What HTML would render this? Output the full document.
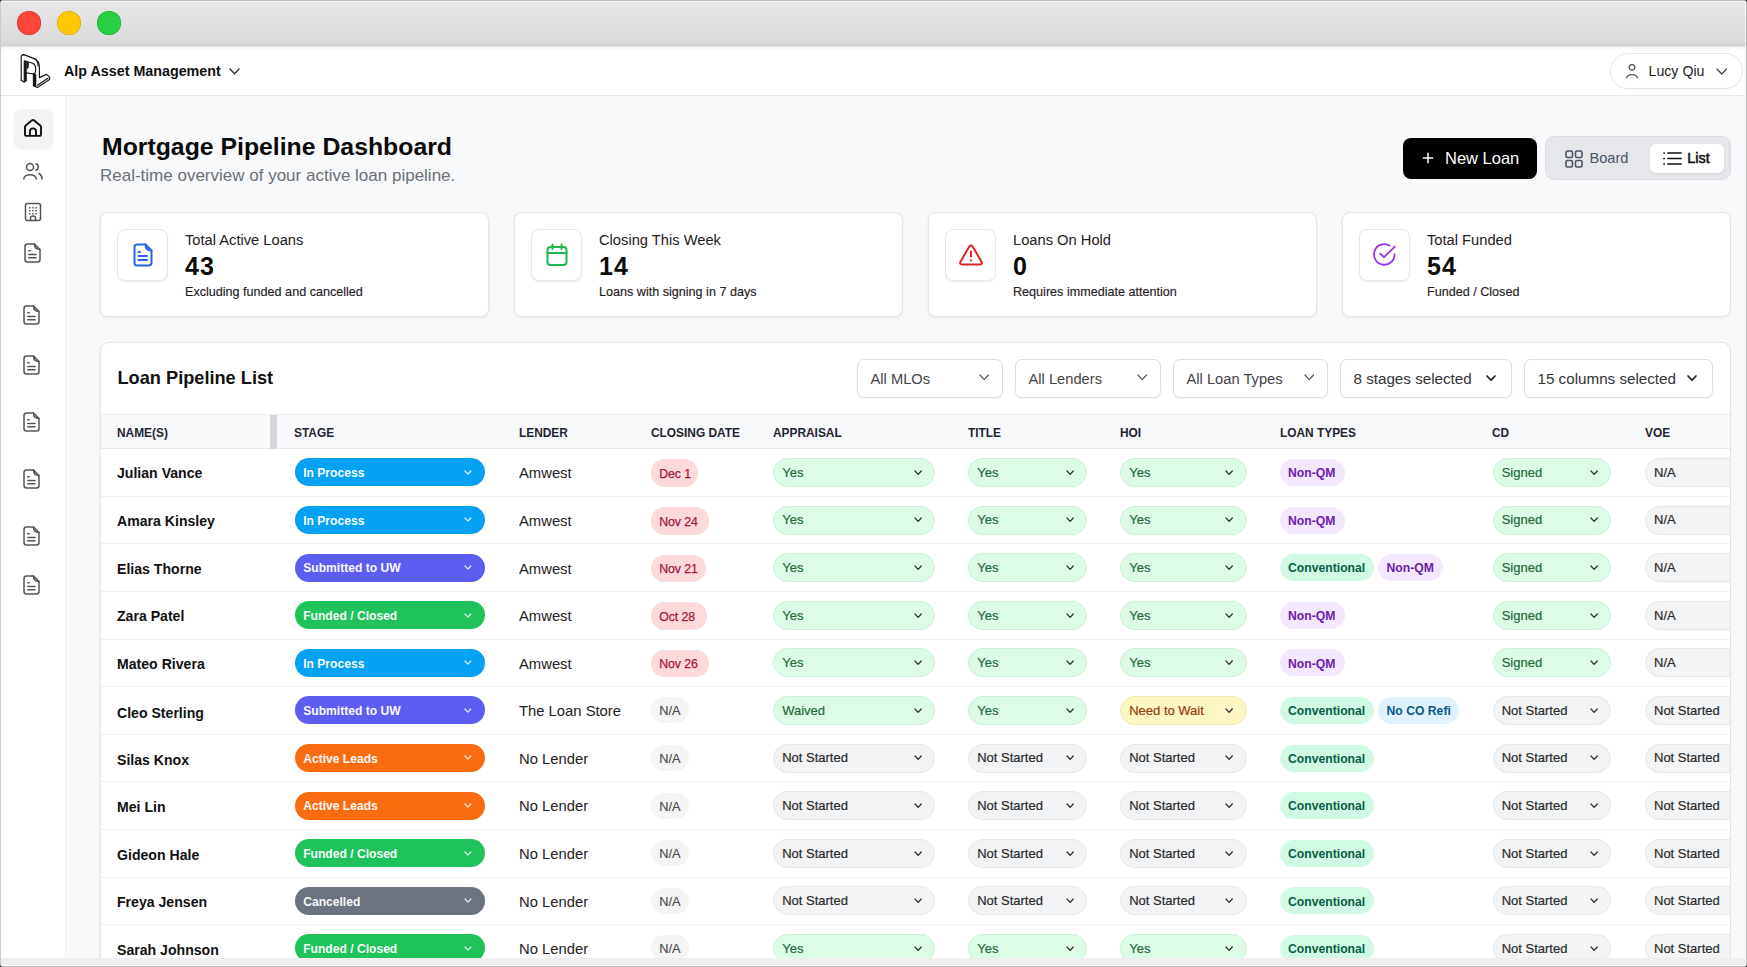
<!DOCTYPE html><html><head><meta charset="utf-8"><style>
*{box-sizing:border-box;margin:0;padding:0}
html,body{width:1747px;height:967px;overflow:hidden;background:#fff;font-family:"Liberation Sans",sans-serif;color:#111}
.abs{position:absolute}
.t{position:absolute;white-space:nowrap;line-height:1}
#win{position:absolute;left:0;top:0;width:1747px;height:967px;overflow:hidden;background:#f8f9fb}
.tl{position:absolute;top:11px;width:24px;height:24px;border-radius:50%}
.box{position:absolute;background:#fff}
.med{-webkit-text-stroke:0.25px currentColor}
</style></head><body><div id="win">
<div class="abs" style="left:0;top:0;width:1747px;height:47px;background:linear-gradient(#e7e7e7 0,#e2e2e2 40%,#dcdbdc 85%,#d2d1d2 97%,#e8e8e8 100%)"></div>
<div class="tl" style="left:17px;top:11px;background:#fe4539;box-shadow:inset 0 0 0 0.7px #dd3a2e"></div>
<div class="tl" style="left:57px;top:11px;background:#fec804;box-shadow:inset 0 0 0 0.7px #dcaa10"></div>
<div class="tl" style="left:97px;top:11px;background:#28cf43;box-shadow:inset 0 0 0 0.7px #1fae38"></div>
<div class="abs" style="left:0;top:47px;width:1747px;height:49px;background:linear-gradient(#f6f6f6 0,#fff 4px);border-bottom:1px solid #e6e7ea"></div>
<svg class="abs" style="left:15px;top:50px" width="40" height="42" viewBox="0 0 40 42">
 <g fill="#151515">
  <path d="M9.3 10.8 L11.8 11.8 V31.3 L9.3 32.3 Z"/>
  <path d="M11.8 11.8 L14.2 12.8 Q13.5 15.5 13.6 17.5 Q12.8 18.5 11.8 19 Z"/>
  <path d="M18.4 23.6 L21.3 24.2 V37 L18.4 35.8 Z"/>
 </g>
 <g fill="none" stroke="#151515" stroke-width="1.15" stroke-linejoin="round" stroke-linecap="round">
  <path d="M6.2 30.2 V6.8 Q6.2 5.4 7.6 5 L9 4.6 L19.2 8.6 Q24.4 11.2 24.4 17.2 V27.6"/>
  <path d="M6.2 30.2 L9.3 32.3 V22.6"/>
  <path d="M9.3 22.6 L17.2 23.8 Q20.6 24 20.6 20.4 V17.6 Q20.6 14.6 17.6 13.3 L9.3 10.8 Z"/>
  <path d="M18.4 23.8 V35.8 L21.3 37 L22.4 37.4 L34.6 29.4 V27.2 L31.6 24.4 L24.4 27.6"/>
  <path d="M22.4 35.2 L33 28.2"/>
  <path d="M9 4.6 L7.6 5 M19.2 8.6 Q23 10.4 23.2 16"/>
 </g>
</svg>
<div class="t" style="left:64px;top:64px;font-size:14.3px;font-weight:bold;color:#111;">Alp Asset Management</div>
<svg class="abs" style="left:227.50px;top:66.60px" width="13" height="8.8" viewBox="0 0 13 8.8"><path d="M2 2 L6.5 6.8 L11 2" fill="none" stroke="#333" stroke-width="1.4" stroke-linecap="round" stroke-linejoin="round"/></svg>
<div class="abs" style="left:1610px;top:53px;width:133px;height:36px;border:1px solid #e3e5e8;border-radius:18px;background:#fff;box-shadow:0 1px 1px rgba(0,0,0,.03)"></div>
<svg class="abs" style="left:1624px;top:63px" width="16" height="16" viewBox="0 0 16 16"><g fill="none" stroke="#555" stroke-width="1.25"><circle cx="8" cy="4.3" r="2.8"/><path d="M2.6 15.5 C2.8 10.3 13.2 10.3 13.4 15.5"/></g></svg>
<div class="t" style="left:1648.5px;top:64px;font-size:14.2px;font-weight:normal;color:#222;">Lucy Qiu</div>
<svg class="abs" style="left:1714.75px;top:67.00px" width="13.5" height="9" viewBox="0 0 13.5 9"><path d="M2 2 L6.75 7 L11.5 2" fill="none" stroke="#444" stroke-width="1.2" stroke-linecap="round" stroke-linejoin="round"/></svg>
<div class="abs" style="left:0;top:96px;width:66px;height:871px;background:#fff;border-right:1px solid #edeff2"></div>
<div class="abs" style="left:14px;top:109px;width:39px;height:39px;border-radius:8px;background:#f3f4f6;box-shadow:0 1px 2px rgba(0,0,0,.08)"></div>
<svg class="abs" style="left:23px;top:118px" width="20" height="20" viewBox="0 0 20 20"><g fill="none" stroke="#111" stroke-width="1.9" stroke-linejoin="round"><path d="M2 16.3 V9 Q2 8.1 2.8 7.4 L8.7 2.5 Q10 1.4 11.3 2.5 L17.2 7.4 Q18 8.1 18 9 V16.3 Q18 17.9 16.4 17.9 H3.6 Q2 17.9 2 16.3 Z"/><path d="M7 17.9 V13.2 Q7 10.4 10 10.4 Q13 10.4 13 13.2 V17.9"/></g></svg>
<svg class="abs" style="left:22px;top:161px" width="22" height="20" viewBox="0 0 22 20"><g fill="none" stroke="#555" stroke-width="1.5" stroke-linecap="round"><circle cx="8" cy="6" r="3.5"/><path d="M1.8 18 C2 12.2 14 12.2 14.2 18"/><path d="M14 2.8 C17 3.5 17 8.5 14 9.2"/><path d="M17 12.5 C19 13.5 20 15.5 20 18"/></g></svg>
<svg class="abs" style="left:24px;top:202px" width="18" height="20" viewBox="0 0 18 20"><g fill="none" stroke="#555" stroke-width="1.5"><rect x="1.5" y="1.5" width="15" height="17" rx="2"/><path d="M6.5 18.5 V15 Q9 13 11.5 15 V18.5"/></g><g fill="#555"><rect x="5" y="5" width="1.5" height="1.5"/><rect x="8.2" y="5" width="1.5" height="1.5"/><rect x="11.4" y="5" width="1.5" height="1.5"/><rect x="5" y="8" width="1.5" height="1.5"/><rect x="8.2" y="8" width="1.5" height="1.5"/><rect x="11.4" y="8" width="1.5" height="1.5"/><rect x="5" y="11" width="1.5" height="1.5"/><rect x="8.2" y="11" width="1.5" height="1.5"/><rect x="11.4" y="11" width="1.5" height="1.5"/></g></svg>
<svg class="abs" style="left:24.0px;top:243px" width="17" height="20" viewBox="0 0 17 20"><g fill="none" stroke="#555" stroke-width="1.5" stroke-linecap="round" stroke-linejoin="round"><path d="M3.5 1 H10.5 L16 6.5 V16.5 Q16 19 13.5 19 H3.5 Q1 19 1 16.5 V3.5 Q1 1 3.5 1 Z"/><path d="M10.5 1 Q10.5 6.5 16 6.5"/><path d="M4.8 7.8 H6.2 M4.8 11.5 H12 M4.8 14.8 H12"/></g></svg>
<svg class="abs" style="left:22.5px;top:305px" width="17" height="20" viewBox="0 0 17 20"><g fill="none" stroke="#555" stroke-width="1.5" stroke-linecap="round" stroke-linejoin="round"><path d="M3.5 1 H10.5 L16 6.5 V16.5 Q16 19 13.5 19 H3.5 Q1 19 1 16.5 V3.5 Q1 1 3.5 1 Z"/><path d="M10.5 1 Q10.5 6.5 16 6.5"/><path d="M4.8 7.8 H6.2 M4.8 11.5 H12 M4.8 14.8 H12"/></g></svg>
<svg class="abs" style="left:22.5px;top:354.5px" width="17" height="20" viewBox="0 0 17 20"><g fill="none" stroke="#555" stroke-width="1.5" stroke-linecap="round" stroke-linejoin="round"><path d="M3.5 1 H10.5 L16 6.5 V16.5 Q16 19 13.5 19 H3.5 Q1 19 1 16.5 V3.5 Q1 1 3.5 1 Z"/><path d="M10.5 1 Q10.5 6.5 16 6.5"/><path d="M4.8 7.8 H6.2 M4.8 11.5 H12 M4.8 14.8 H12"/></g></svg>
<svg class="abs" style="left:22.5px;top:411.8px" width="17" height="20" viewBox="0 0 17 20"><g fill="none" stroke="#555" stroke-width="1.5" stroke-linecap="round" stroke-linejoin="round"><path d="M3.5 1 H10.5 L16 6.5 V16.5 Q16 19 13.5 19 H3.5 Q1 19 1 16.5 V3.5 Q1 1 3.5 1 Z"/><path d="M10.5 1 Q10.5 6.5 16 6.5"/><path d="M4.8 7.8 H6.2 M4.8 11.5 H12 M4.8 14.8 H12"/></g></svg>
<svg class="abs" style="left:22.5px;top:468.7px" width="17" height="20" viewBox="0 0 17 20"><g fill="none" stroke="#555" stroke-width="1.5" stroke-linecap="round" stroke-linejoin="round"><path d="M3.5 1 H10.5 L16 6.5 V16.5 Q16 19 13.5 19 H3.5 Q1 19 1 16.5 V3.5 Q1 1 3.5 1 Z"/><path d="M10.5 1 Q10.5 6.5 16 6.5"/><path d="M4.8 7.8 H6.2 M4.8 11.5 H12 M4.8 14.8 H12"/></g></svg>
<svg class="abs" style="left:22.5px;top:525.7px" width="17" height="20" viewBox="0 0 17 20"><g fill="none" stroke="#555" stroke-width="1.5" stroke-linecap="round" stroke-linejoin="round"><path d="M3.5 1 H10.5 L16 6.5 V16.5 Q16 19 13.5 19 H3.5 Q1 19 1 16.5 V3.5 Q1 1 3.5 1 Z"/><path d="M10.5 1 Q10.5 6.5 16 6.5"/><path d="M4.8 7.8 H6.2 M4.8 11.5 H12 M4.8 14.8 H12"/></g></svg>
<svg class="abs" style="left:22.5px;top:575.4px" width="17" height="20" viewBox="0 0 17 20"><g fill="none" stroke="#555" stroke-width="1.5" stroke-linecap="round" stroke-linejoin="round"><path d="M3.5 1 H10.5 L16 6.5 V16.5 Q16 19 13.5 19 H3.5 Q1 19 1 16.5 V3.5 Q1 1 3.5 1 Z"/><path d="M10.5 1 Q10.5 6.5 16 6.5"/><path d="M4.8 7.8 H6.2 M4.8 11.5 H12 M4.8 14.8 H12"/></g></svg>
<div class="t" style="left:102px;top:135px;font-size:24.8px;font-weight:bold;color:#0b0b0b;">Mortgage Pipeline Dashboard</div>
<div class="t" style="left:100px;top:167px;font-size:17px;font-weight:normal;color:#6b7076;">Real-time overview of your active loan pipeline.</div>
<div class="abs" style="left:1403px;top:138px;width:134px;height:41px;background:#000;border-radius:8px"></div>
<svg class="abs" style="left:1421px;top:151px" width="14" height="14" viewBox="0 0 14 14"><path d="M7 1.8 V12.2 M1.8 7 H12.2" stroke="#fff" stroke-width="1.5"/></svg>
<div class="t" style="left:1445px;top:150px;font-size:16.5px;font-weight:normal;color:#fff;">New Loan</div>
<div class="abs" style="left:1545px;top:136px;width:186px;height:44px;background:#e5e7eb;border:1px solid #dadde2;border-radius:9px"></div>
<div class="abs" style="left:1650px;top:144px;width:74px;height:29px;background:#fff;border-radius:6px;box-shadow:0 1px 2px rgba(0,0,0,.08)"></div>
<svg class="abs" style="left:1565px;top:150px" width="19" height="18" viewBox="0 0 19 18"><g fill="none" stroke="#4b5563" stroke-width="1.6"><rect x="1" y="1" width="6.5" height="6.5" rx="1.5"/><rect x="10.5" y="1" width="6.5" height="6.5" rx="1.5"/><rect x="1" y="10.5" width="6.5" height="6.5" rx="1.5"/><rect x="10.5" y="10.5" width="6.5" height="6.5" rx="1.5"/></g></svg>
<div class="t" style="left:1589.5px;top:151px;font-size:14.6px;font-weight:normal;color:#4b5563;">Board</div>
<svg class="abs" style="left:1663px;top:151px" width="19" height="15" viewBox="0 0 19 15"><g stroke="#111" stroke-width="1.7" stroke-linecap="round"><path d="M1 2 H1.3 M1 7.5 H1.3 M1 13 H1.3"/><path d="M5 2 H18 M5 7.5 H18 M5 13 H18"/></g></svg>
<div class="t" style="left:1687.3px;top:151px;font-size:14.4px;font-weight:normal;color:#111;-webkit-text-stroke:0.55px #111">List</div>
<div class="abs" style="left:100px;top:212px;width:389px;height:105px;background:#fff;border:1px solid #e3e5e9;border-radius:8px;box-shadow:0 1px 3px rgba(0,0,0,.07)"></div>
<div class="abs" style="left:117px;top:229px;width:51px;height:52px;border:1px solid #e5e7eb;border-radius:8px;box-shadow:0 1px 2px rgba(0,0,0,.07);background:#fff"><svg class="abs" style="left:15px;top:13px" width="20" height="24" viewBox="0 0 20 24"><g fill="none" stroke="#2563eb" stroke-width="2" stroke-linecap="round" stroke-linejoin="round"><path d="M4 1.5 H12.5 L18.5 7.5 V19.5 Q18.5 22.5 15.5 22.5 H4 Q1.5 22.5 1.5 19.5 V4.5 Q1.5 1.5 4 1.5 Z"/><path d="M12.5 1.5 Q12.5 7.5 18.5 7.5"/><path d="M5.5 9 H7 M5.5 13 H14 M5.5 17 H14"/></g></svg></div>
<div class="t" style="left:185px;top:233px;font-size:14.7px;font-weight:normal;color:#1f2023;">Total Active Loans</div>
<div class="t" style="left:185px;top:254px;font-size:25px;font-weight:bold;color:#0b0b0b;letter-spacing:1.2px">43</div>
<div class="t" style="left:185px;top:286px;font-size:12.6px;font-weight:normal;color:#1f2023;-webkit-text-stroke:0.15px #1f2023">Excluding funded and cancelled</div>
<div class="abs" style="left:514px;top:212px;width:389px;height:105px;background:#fff;border:1px solid #e3e5e9;border-radius:8px;box-shadow:0 1px 3px rgba(0,0,0,.07)"></div>
<div class="abs" style="left:531px;top:229px;width:51px;height:52px;border:1px solid #e5e7eb;border-radius:8px;box-shadow:0 1px 2px rgba(0,0,0,.07);background:#fff"><svg class="abs" style="left:14px;top:13px" width="22" height="24" viewBox="0 0 22 24"><g fill="none" stroke="#1fb84e" stroke-width="2" stroke-linecap="round" stroke-linejoin="round"><rect x="1.5" y="4" width="19" height="18" rx="3"/><path d="M1.5 10 H20.5 M6.5 1.5 V6 M15.5 1.5 V6"/></g></svg></div>
<div class="t" style="left:599px;top:233px;font-size:14.7px;font-weight:normal;color:#1f2023;">Closing This Week</div>
<div class="t" style="left:599px;top:254px;font-size:25px;font-weight:bold;color:#0b0b0b;letter-spacing:1.2px">14</div>
<div class="t" style="left:599px;top:286px;font-size:12.6px;font-weight:normal;color:#1f2023;-webkit-text-stroke:0.15px #1f2023">Loans with signing in 7 days</div>
<div class="abs" style="left:928px;top:212px;width:389px;height:105px;background:#fff;border:1px solid #e3e5e9;border-radius:8px;box-shadow:0 1px 3px rgba(0,0,0,.07)"></div>
<div class="abs" style="left:945px;top:229px;width:51px;height:52px;border:1px solid #e5e7eb;border-radius:8px;box-shadow:0 1px 2px rgba(0,0,0,.07);background:#fff"><svg class="abs" style="left:13px;top:14px" width="24" height="22" viewBox="0 0 24 22"><g fill="none" stroke="#dc2626" stroke-width="2" stroke-linecap="round" stroke-linejoin="round"><path d="M10.3 2.5 Q12 -0.2 13.7 2.5 L22.5 17.8 Q23.8 20.5 20.8 20.5 H3.2 Q0.2 20.5 1.5 17.8 Z"/><path d="M12 7.5 V12.5 M12 16.3 V16.5"/></g></svg></div>
<div class="t" style="left:1013px;top:233px;font-size:14.7px;font-weight:normal;color:#1f2023;">Loans On Hold</div>
<div class="t" style="left:1013px;top:254px;font-size:25px;font-weight:bold;color:#0b0b0b;letter-spacing:1.2px">0</div>
<div class="t" style="left:1013px;top:286px;font-size:12.6px;font-weight:normal;color:#1f2023;-webkit-text-stroke:0.15px #1f2023">Requires immediate attention</div>
<div class="abs" style="left:1342px;top:212px;width:389px;height:105px;background:#fff;border:1px solid #e3e5e9;border-radius:8px;box-shadow:0 1px 3px rgba(0,0,0,.07)"></div>
<div class="abs" style="left:1359px;top:229px;width:51px;height:52px;border:1px solid #e5e7eb;border-radius:8px;box-shadow:0 1px 2px rgba(0,0,0,.07);background:#fff"><svg class="abs" style="left:12px;top:12px" width="26" height="26" viewBox="0 0 26 26"><g fill="none" stroke="#9333ea" stroke-width="1.8" stroke-linecap="round" stroke-linejoin="round"><path d="M22.6 12.2 A10.3 10.3 0 1 1 17.6 3.6"/><path d="M8.2 11.6 L12 15.2 L22.8 4.6"/></g></svg></div>
<div class="t" style="left:1427px;top:233px;font-size:14.7px;font-weight:normal;color:#1f2023;">Total Funded</div>
<div class="t" style="left:1427px;top:254px;font-size:25px;font-weight:bold;color:#0b0b0b;letter-spacing:1.2px">54</div>
<div class="t" style="left:1427px;top:286px;font-size:12.6px;font-weight:normal;color:#1f2023;-webkit-text-stroke:0.15px #1f2023">Funded / Closed</div>
<div class="abs" style="left:100px;top:342px;width:1631px;height:640px;background:#fff;border:1px solid #e3e5e9;border-radius:9px;box-shadow:0 1px 3px rgba(0,0,0,.06)"></div>
<div class="t" style="left:117.5px;top:369px;font-size:18.2px;font-weight:bold;color:#111;">Loan Pipeline List</div>
<div class="abs" style="left:857px;top:359px;width:146px;height:39px;border:1px solid #dcdddf;border-radius:7px;background:#fff;box-shadow:0 1px 2px rgba(0,0,0,.06)"></div>
<div class="t" style="left:870.5px;top:372px;font-size:14.7px;font-weight:normal;color:#444;">All MLOs</div>
<svg class="abs" style="left:978.25px;top:373.10px" width="12.5" height="8.6" viewBox="0 0 12.5 8.6"><path d="M2 2 L6.25 6.6 L10.5 2" fill="none" stroke="#555" stroke-width="1.2" stroke-linecap="round" stroke-linejoin="round"/></svg>
<div class="abs" style="left:1015px;top:359px;width:146px;height:39px;border:1px solid #dcdddf;border-radius:7px;background:#fff;box-shadow:0 1px 2px rgba(0,0,0,.06)"></div>
<div class="t" style="left:1028.5px;top:372px;font-size:14.7px;font-weight:normal;color:#444;">All Lenders</div>
<svg class="abs" style="left:1136.25px;top:373.10px" width="12.5" height="8.6" viewBox="0 0 12.5 8.6"><path d="M2 2 L6.25 6.6 L10.5 2" fill="none" stroke="#555" stroke-width="1.2" stroke-linecap="round" stroke-linejoin="round"/></svg>
<div class="abs" style="left:1173px;top:359px;width:155px;height:39px;border:1px solid #dcdddf;border-radius:7px;background:#fff;box-shadow:0 1px 2px rgba(0,0,0,.06)"></div>
<div class="t" style="left:1186.5px;top:372px;font-size:14.7px;font-weight:normal;color:#444;">All Loan Types</div>
<svg class="abs" style="left:1303.25px;top:373.10px" width="12.5" height="8.6" viewBox="0 0 12.5 8.6"><path d="M2 2 L6.25 6.6 L10.5 2" fill="none" stroke="#555" stroke-width="1.2" stroke-linecap="round" stroke-linejoin="round"/></svg>
<div class="abs" style="left:1340px;top:359px;width:172px;height:39px;border:1px solid #dcdddf;border-radius:7px;background:#fff;box-shadow:0 1px 2px rgba(0,0,0,.06)"></div>
<div class="t" style="left:1353.5px;top:371px;font-size:15.2px;font-weight:normal;color:#333;">8 stages selected</div>
<svg class="abs" style="left:1484.50px;top:374.20px" width="12" height="8.2" viewBox="0 0 12 8.2"><path d="M2 2 L6.0 6.2 L10 2" fill="none" stroke="#222" stroke-width="1.7" stroke-linecap="round" stroke-linejoin="round"/></svg>
<div class="abs" style="left:1524px;top:359px;width:189px;height:39px;border:1px solid #dcdddf;border-radius:7px;background:#fff;box-shadow:0 1px 2px rgba(0,0,0,.06)"></div>
<div class="t" style="left:1537.5px;top:371px;font-size:15.2px;font-weight:normal;color:#333;">15 columns selected</div>
<svg class="abs" style="left:1685.50px;top:374.20px" width="12" height="8.2" viewBox="0 0 12 8.2"><path d="M2 2 L6.0 6.2 L10 2" fill="none" stroke="#222" stroke-width="1.7" stroke-linecap="round" stroke-linejoin="round"/></svg>
<div class="abs" style="left:101px;top:414px;width:1629px;height:35px;background:#f8f9fb;border-top:1px solid #eceef1;border-bottom:1px solid #e8eaed"></div>
<div class="abs" style="left:270px;top:415px;width:7px;height:34px;background:#d3d5d9"></div>
<div class="t" style="left:117px;top:428px;font-size:11.9px;font-weight:bold;color:#1f2430;">NAME(S)</div>
<div class="t" style="left:294px;top:428px;font-size:11.9px;font-weight:bold;color:#1f2430;">STAGE</div>
<div class="t" style="left:519px;top:428px;font-size:11.9px;font-weight:bold;color:#1f2430;">LENDER</div>
<div class="t" style="left:651px;top:428px;font-size:11.9px;font-weight:bold;color:#1f2430;">CLOSING DATE</div>
<div class="t" style="left:773px;top:428px;font-size:11.9px;font-weight:bold;color:#1f2430;">APPRAISAL</div>
<div class="t" style="left:968px;top:428px;font-size:11.9px;font-weight:bold;color:#1f2430;">TITLE</div>
<div class="t" style="left:1120px;top:428px;font-size:11.9px;font-weight:bold;color:#1f2430;">HOI</div>
<div class="t" style="left:1280px;top:428px;font-size:11.9px;font-weight:bold;color:#1f2430;">LOAN TYPES</div>
<div class="t" style="left:1492px;top:428px;font-size:11.9px;font-weight:bold;color:#1f2430;">CD</div>
<div class="t" style="left:1645px;top:428px;font-size:11.9px;font-weight:bold;color:#1f2430;">VOE</div>
<div class="abs" style="left:101px;top:495.70px;width:1629px;height:1px;background:#eceef1"></div>
<div class="t" style="left:117px;top:466px;font-size:14.1px;font-weight:bold;color:#111;">Julian Vance</div>
<div class="abs" style="left:294.5px;top:458.40px;width:190.5px;height:28px;border-radius:14px;background:#05a2f3"></div>
<div class="t" style="left:303.2px;top:467px;font-size:12.1px;font-weight:bold;color:#fff;opacity:.96">In Process</div>
<svg class="abs" style="left:463.40px;top:468.85px" width="9.8" height="7.1" viewBox="0 0 9.8 7.1"><path d="M2 2 L4.9 5.1 L7.800000000000001 2" fill="none" stroke="rgba(255,255,255,.85)" stroke-width="1.3" stroke-linecap="round" stroke-linejoin="round"/></svg>
<div class="t" style="left:519px;top:466px;font-size:14.8px;font-weight:normal;color:#222;">Amwest</div>
<div class="abs" style="left:651px;top:459.40px;width:46.5px;height:27.6px;border-radius:13.8px;background:#fdd9dc"></div>
<div class="t" style="left:659.3px;top:468px;font-size:12.3px;font-weight:normal;color:#a3173a;letter-spacing:-0.1px;-webkit-text-stroke:0.25px #a3173a">Dec 1</div>
<div class="abs" style="left:773px;top:457.90px;width:162px;height:29px;border-radius:14.5px;background:#dcfce7;border:1px solid #cdeed8"></div>
<div class="t" style="left:782.2px;top:466px;font-size:13px;font-weight:normal;color:#1e6b3c;-webkit-text-stroke:0.2px #1e6b3c">Yes</div>
<svg class="abs" style="left:912.85px;top:468.70px" width="10.3" height="7.4" viewBox="0 0 10.3 7.4"><path d="M2 2 L5.15 5.4 L8.3 2" fill="none" stroke="#333" stroke-width="1.3" stroke-linecap="round" stroke-linejoin="round"/></svg>
<div class="abs" style="left:968px;top:457.90px;width:119px;height:29px;border-radius:14.5px;background:#dcfce7;border:1px solid #cdeed8"></div>
<div class="t" style="left:977.2px;top:466px;font-size:13px;font-weight:normal;color:#1e6b3c;-webkit-text-stroke:0.2px #1e6b3c">Yes</div>
<svg class="abs" style="left:1064.85px;top:468.70px" width="10.3" height="7.4" viewBox="0 0 10.3 7.4"><path d="M2 2 L5.15 5.4 L8.3 2" fill="none" stroke="#333" stroke-width="1.3" stroke-linecap="round" stroke-linejoin="round"/></svg>
<div class="abs" style="left:1120px;top:457.90px;width:126.5px;height:29px;border-radius:14.5px;background:#dcfce7;border:1px solid #cdeed8"></div>
<div class="t" style="left:1129.2px;top:466px;font-size:13px;font-weight:normal;color:#1e6b3c;-webkit-text-stroke:0.2px #1e6b3c">Yes</div>
<svg class="abs" style="left:1224.35px;top:468.70px" width="10.3" height="7.4" viewBox="0 0 10.3 7.4"><path d="M2 2 L5.15 5.4 L8.3 2" fill="none" stroke="#333" stroke-width="1.3" stroke-linecap="round" stroke-linejoin="round"/></svg>
<div class="abs" style="left:1492.5px;top:457.90px;width:118.5px;height:29px;border-radius:14.5px;background:#dcfce7;border:1px solid #cdeed8"></div>
<div class="t" style="left:1501.7px;top:466px;font-size:13px;font-weight:normal;color:#1e6b3c;-webkit-text-stroke:0.2px #1e6b3c">Signed</div>
<svg class="abs" style="left:1588.85px;top:468.70px" width="10.3" height="7.4" viewBox="0 0 10.3 7.4"><path d="M2 2 L5.15 5.4 L8.3 2" fill="none" stroke="#333" stroke-width="1.3" stroke-linecap="round" stroke-linejoin="round"/></svg>
<div class="abs" style="left:1645px;top:457.90px;width:120px;height:29px;border-radius:14.5px;background:#f3f4f6;border:1px solid #e6e7ea"></div>
<div class="t" style="left:1654px;top:466px;font-size:13px;font-weight:normal;color:#2a2a2a;-webkit-text-stroke:0.2px #2a2a2a">N/A</div>
<div class="abs" style="left:1279.5px;top:458.90px;width:65px;height:27px;border-radius:13.5px;background:#f3e8ff"></div>
<div class="t" style="left:1288.0px;top:467px;font-size:12.2px;font-weight:bold;color:#6b21a8;">Non-QM</div>
<div class="abs" style="left:101px;top:543.30px;width:1629px;height:1px;background:#eceef1"></div>
<div class="t" style="left:117px;top:514px;font-size:14.1px;font-weight:bold;color:#111;">Amara Kinsley</div>
<div class="abs" style="left:294.5px;top:506.00px;width:190.5px;height:28px;border-radius:14px;background:#05a2f3"></div>
<div class="t" style="left:303.2px;top:515px;font-size:12.1px;font-weight:bold;color:#fff;opacity:.96">In Process</div>
<svg class="abs" style="left:463.40px;top:516.45px" width="9.8" height="7.1" viewBox="0 0 9.8 7.1"><path d="M2 2 L4.9 5.1 L7.800000000000001 2" fill="none" stroke="rgba(255,255,255,.85)" stroke-width="1.3" stroke-linecap="round" stroke-linejoin="round"/></svg>
<div class="t" style="left:519px;top:514px;font-size:14.8px;font-weight:normal;color:#222;">Amwest</div>
<div class="abs" style="left:651px;top:507.00px;width:57.5px;height:27.6px;border-radius:13.8px;background:#fdd9dc"></div>
<div class="t" style="left:659.3px;top:516px;font-size:12.3px;font-weight:normal;color:#a3173a;letter-spacing:-0.1px;-webkit-text-stroke:0.25px #a3173a">Nov 24</div>
<div class="abs" style="left:773px;top:505.50px;width:162px;height:29px;border-radius:14.5px;background:#dcfce7;border:1px solid #cdeed8"></div>
<div class="t" style="left:782.2px;top:513px;font-size:13px;font-weight:normal;color:#1e6b3c;-webkit-text-stroke:0.2px #1e6b3c">Yes</div>
<svg class="abs" style="left:912.85px;top:516.30px" width="10.3" height="7.4" viewBox="0 0 10.3 7.4"><path d="M2 2 L5.15 5.4 L8.3 2" fill="none" stroke="#333" stroke-width="1.3" stroke-linecap="round" stroke-linejoin="round"/></svg>
<div class="abs" style="left:968px;top:505.50px;width:119px;height:29px;border-radius:14.5px;background:#dcfce7;border:1px solid #cdeed8"></div>
<div class="t" style="left:977.2px;top:513px;font-size:13px;font-weight:normal;color:#1e6b3c;-webkit-text-stroke:0.2px #1e6b3c">Yes</div>
<svg class="abs" style="left:1064.85px;top:516.30px" width="10.3" height="7.4" viewBox="0 0 10.3 7.4"><path d="M2 2 L5.15 5.4 L8.3 2" fill="none" stroke="#333" stroke-width="1.3" stroke-linecap="round" stroke-linejoin="round"/></svg>
<div class="abs" style="left:1120px;top:505.50px;width:126.5px;height:29px;border-radius:14.5px;background:#dcfce7;border:1px solid #cdeed8"></div>
<div class="t" style="left:1129.2px;top:513px;font-size:13px;font-weight:normal;color:#1e6b3c;-webkit-text-stroke:0.2px #1e6b3c">Yes</div>
<svg class="abs" style="left:1224.35px;top:516.30px" width="10.3" height="7.4" viewBox="0 0 10.3 7.4"><path d="M2 2 L5.15 5.4 L8.3 2" fill="none" stroke="#333" stroke-width="1.3" stroke-linecap="round" stroke-linejoin="round"/></svg>
<div class="abs" style="left:1492.5px;top:505.50px;width:118.5px;height:29px;border-radius:14.5px;background:#dcfce7;border:1px solid #cdeed8"></div>
<div class="t" style="left:1501.7px;top:513px;font-size:13px;font-weight:normal;color:#1e6b3c;-webkit-text-stroke:0.2px #1e6b3c">Signed</div>
<svg class="abs" style="left:1588.85px;top:516.30px" width="10.3" height="7.4" viewBox="0 0 10.3 7.4"><path d="M2 2 L5.15 5.4 L8.3 2" fill="none" stroke="#333" stroke-width="1.3" stroke-linecap="round" stroke-linejoin="round"/></svg>
<div class="abs" style="left:1645px;top:505.50px;width:120px;height:29px;border-radius:14.5px;background:#f3f4f6;border:1px solid #e6e7ea"></div>
<div class="t" style="left:1654px;top:513px;font-size:13px;font-weight:normal;color:#2a2a2a;-webkit-text-stroke:0.2px #2a2a2a">N/A</div>
<div class="abs" style="left:1279.5px;top:506.50px;width:65px;height:27px;border-radius:13.5px;background:#f3e8ff"></div>
<div class="t" style="left:1288.0px;top:515px;font-size:12.2px;font-weight:bold;color:#6b21a8;">Non-QM</div>
<div class="abs" style="left:101px;top:590.90px;width:1629px;height:1px;background:#eceef1"></div>
<div class="t" style="left:117px;top:562px;font-size:14.1px;font-weight:bold;color:#111;">Elias Thorne</div>
<div class="abs" style="left:294.5px;top:553.60px;width:190.5px;height:28px;border-radius:14px;background:#5d5df2"></div>
<div class="t" style="left:303.2px;top:562px;font-size:12.1px;font-weight:bold;color:#fff;opacity:.96">Submitted to UW</div>
<svg class="abs" style="left:463.40px;top:564.05px" width="9.8" height="7.1" viewBox="0 0 9.8 7.1"><path d="M2 2 L4.9 5.1 L7.800000000000001 2" fill="none" stroke="rgba(255,255,255,.85)" stroke-width="1.3" stroke-linecap="round" stroke-linejoin="round"/></svg>
<div class="t" style="left:519px;top:562px;font-size:14.8px;font-weight:normal;color:#222;">Amwest</div>
<div class="abs" style="left:651px;top:554.60px;width:54.5px;height:27.6px;border-radius:13.8px;background:#fdd9dc"></div>
<div class="t" style="left:659.3px;top:563px;font-size:12.3px;font-weight:normal;color:#a3173a;letter-spacing:-0.1px;-webkit-text-stroke:0.25px #a3173a">Nov 21</div>
<div class="abs" style="left:773px;top:553.10px;width:162px;height:29px;border-radius:14.5px;background:#dcfce7;border:1px solid #cdeed8"></div>
<div class="t" style="left:782.2px;top:561px;font-size:13px;font-weight:normal;color:#1e6b3c;-webkit-text-stroke:0.2px #1e6b3c">Yes</div>
<svg class="abs" style="left:912.85px;top:563.90px" width="10.3" height="7.4" viewBox="0 0 10.3 7.4"><path d="M2 2 L5.15 5.4 L8.3 2" fill="none" stroke="#333" stroke-width="1.3" stroke-linecap="round" stroke-linejoin="round"/></svg>
<div class="abs" style="left:968px;top:553.10px;width:119px;height:29px;border-radius:14.5px;background:#dcfce7;border:1px solid #cdeed8"></div>
<div class="t" style="left:977.2px;top:561px;font-size:13px;font-weight:normal;color:#1e6b3c;-webkit-text-stroke:0.2px #1e6b3c">Yes</div>
<svg class="abs" style="left:1064.85px;top:563.90px" width="10.3" height="7.4" viewBox="0 0 10.3 7.4"><path d="M2 2 L5.15 5.4 L8.3 2" fill="none" stroke="#333" stroke-width="1.3" stroke-linecap="round" stroke-linejoin="round"/></svg>
<div class="abs" style="left:1120px;top:553.10px;width:126.5px;height:29px;border-radius:14.5px;background:#dcfce7;border:1px solid #cdeed8"></div>
<div class="t" style="left:1129.2px;top:561px;font-size:13px;font-weight:normal;color:#1e6b3c;-webkit-text-stroke:0.2px #1e6b3c">Yes</div>
<svg class="abs" style="left:1224.35px;top:563.90px" width="10.3" height="7.4" viewBox="0 0 10.3 7.4"><path d="M2 2 L5.15 5.4 L8.3 2" fill="none" stroke="#333" stroke-width="1.3" stroke-linecap="round" stroke-linejoin="round"/></svg>
<div class="abs" style="left:1492.5px;top:553.10px;width:118.5px;height:29px;border-radius:14.5px;background:#dcfce7;border:1px solid #cdeed8"></div>
<div class="t" style="left:1501.7px;top:561px;font-size:13px;font-weight:normal;color:#1e6b3c;-webkit-text-stroke:0.2px #1e6b3c">Signed</div>
<svg class="abs" style="left:1588.85px;top:563.90px" width="10.3" height="7.4" viewBox="0 0 10.3 7.4"><path d="M2 2 L5.15 5.4 L8.3 2" fill="none" stroke="#333" stroke-width="1.3" stroke-linecap="round" stroke-linejoin="round"/></svg>
<div class="abs" style="left:1645px;top:553.10px;width:120px;height:29px;border-radius:14.5px;background:#f3f4f6;border:1px solid #e6e7ea"></div>
<div class="t" style="left:1654px;top:561px;font-size:13px;font-weight:normal;color:#2a2a2a;-webkit-text-stroke:0.2px #2a2a2a">N/A</div>
<div class="abs" style="left:1279.5px;top:554.10px;width:94px;height:27px;border-radius:13.5px;background:#d1fae5"></div>
<div class="t" style="left:1288.0px;top:562px;font-size:12.2px;font-weight:bold;color:#065f46;">Conventional</div>
<div class="abs" style="left:1378.0px;top:554.10px;width:65px;height:27px;border-radius:13.5px;background:#f3e8ff"></div>
<div class="t" style="left:1386.5px;top:562px;font-size:12.2px;font-weight:bold;color:#6b21a8;">Non-QM</div>
<div class="abs" style="left:101px;top:638.50px;width:1629px;height:1px;background:#eceef1"></div>
<div class="t" style="left:117px;top:609px;font-size:14.1px;font-weight:bold;color:#111;">Zara Patel</div>
<div class="abs" style="left:294.5px;top:601.20px;width:190.5px;height:28px;border-radius:14px;background:#1fc35a"></div>
<div class="t" style="left:303.2px;top:610px;font-size:12.1px;font-weight:bold;color:#fff;opacity:.96">Funded / Closed</div>
<svg class="abs" style="left:463.40px;top:611.65px" width="9.8" height="7.1" viewBox="0 0 9.8 7.1"><path d="M2 2 L4.9 5.1 L7.800000000000001 2" fill="none" stroke="rgba(255,255,255,.85)" stroke-width="1.3" stroke-linecap="round" stroke-linejoin="round"/></svg>
<div class="t" style="left:519px;top:609px;font-size:14.8px;font-weight:normal;color:#222;">Amwest</div>
<div class="abs" style="left:651px;top:602.20px;width:55.5px;height:27.6px;border-radius:13.8px;background:#fdd9dc"></div>
<div class="t" style="left:659.3px;top:611px;font-size:12.3px;font-weight:normal;color:#a3173a;letter-spacing:-0.1px;-webkit-text-stroke:0.25px #a3173a">Oct 28</div>
<div class="abs" style="left:773px;top:600.70px;width:162px;height:29px;border-radius:14.5px;background:#dcfce7;border:1px solid #cdeed8"></div>
<div class="t" style="left:782.2px;top:609px;font-size:13px;font-weight:normal;color:#1e6b3c;-webkit-text-stroke:0.2px #1e6b3c">Yes</div>
<svg class="abs" style="left:912.85px;top:611.50px" width="10.3" height="7.4" viewBox="0 0 10.3 7.4"><path d="M2 2 L5.15 5.4 L8.3 2" fill="none" stroke="#333" stroke-width="1.3" stroke-linecap="round" stroke-linejoin="round"/></svg>
<div class="abs" style="left:968px;top:600.70px;width:119px;height:29px;border-radius:14.5px;background:#dcfce7;border:1px solid #cdeed8"></div>
<div class="t" style="left:977.2px;top:609px;font-size:13px;font-weight:normal;color:#1e6b3c;-webkit-text-stroke:0.2px #1e6b3c">Yes</div>
<svg class="abs" style="left:1064.85px;top:611.50px" width="10.3" height="7.4" viewBox="0 0 10.3 7.4"><path d="M2 2 L5.15 5.4 L8.3 2" fill="none" stroke="#333" stroke-width="1.3" stroke-linecap="round" stroke-linejoin="round"/></svg>
<div class="abs" style="left:1120px;top:600.70px;width:126.5px;height:29px;border-radius:14.5px;background:#dcfce7;border:1px solid #cdeed8"></div>
<div class="t" style="left:1129.2px;top:609px;font-size:13px;font-weight:normal;color:#1e6b3c;-webkit-text-stroke:0.2px #1e6b3c">Yes</div>
<svg class="abs" style="left:1224.35px;top:611.50px" width="10.3" height="7.4" viewBox="0 0 10.3 7.4"><path d="M2 2 L5.15 5.4 L8.3 2" fill="none" stroke="#333" stroke-width="1.3" stroke-linecap="round" stroke-linejoin="round"/></svg>
<div class="abs" style="left:1492.5px;top:600.70px;width:118.5px;height:29px;border-radius:14.5px;background:#dcfce7;border:1px solid #cdeed8"></div>
<div class="t" style="left:1501.7px;top:609px;font-size:13px;font-weight:normal;color:#1e6b3c;-webkit-text-stroke:0.2px #1e6b3c">Signed</div>
<svg class="abs" style="left:1588.85px;top:611.50px" width="10.3" height="7.4" viewBox="0 0 10.3 7.4"><path d="M2 2 L5.15 5.4 L8.3 2" fill="none" stroke="#333" stroke-width="1.3" stroke-linecap="round" stroke-linejoin="round"/></svg>
<div class="abs" style="left:1645px;top:600.70px;width:120px;height:29px;border-radius:14.5px;background:#f3f4f6;border:1px solid #e6e7ea"></div>
<div class="t" style="left:1654px;top:609px;font-size:13px;font-weight:normal;color:#2a2a2a;-webkit-text-stroke:0.2px #2a2a2a">N/A</div>
<div class="abs" style="left:1279.5px;top:601.70px;width:65px;height:27px;border-radius:13.5px;background:#f3e8ff"></div>
<div class="t" style="left:1288.0px;top:610px;font-size:12.2px;font-weight:bold;color:#6b21a8;">Non-QM</div>
<div class="abs" style="left:101px;top:686.10px;width:1629px;height:1px;background:#eceef1"></div>
<div class="t" style="left:117px;top:657px;font-size:14.1px;font-weight:bold;color:#111;">Mateo Rivera</div>
<div class="abs" style="left:294.5px;top:648.80px;width:190.5px;height:28px;border-radius:14px;background:#05a2f3"></div>
<div class="t" style="left:303.2px;top:658px;font-size:12.1px;font-weight:bold;color:#fff;opacity:.96">In Process</div>
<svg class="abs" style="left:463.40px;top:659.25px" width="9.8" height="7.1" viewBox="0 0 9.8 7.1"><path d="M2 2 L4.9 5.1 L7.800000000000001 2" fill="none" stroke="rgba(255,255,255,.85)" stroke-width="1.3" stroke-linecap="round" stroke-linejoin="round"/></svg>
<div class="t" style="left:519px;top:657px;font-size:14.8px;font-weight:normal;color:#222;">Amwest</div>
<div class="abs" style="left:651px;top:649.80px;width:57.5px;height:27.6px;border-radius:13.8px;background:#fdd9dc"></div>
<div class="t" style="left:659.3px;top:658px;font-size:12.3px;font-weight:normal;color:#a3173a;letter-spacing:-0.1px;-webkit-text-stroke:0.25px #a3173a">Nov 26</div>
<div class="abs" style="left:773px;top:648.30px;width:162px;height:29px;border-radius:14.5px;background:#dcfce7;border:1px solid #cdeed8"></div>
<div class="t" style="left:782.2px;top:656px;font-size:13px;font-weight:normal;color:#1e6b3c;-webkit-text-stroke:0.2px #1e6b3c">Yes</div>
<svg class="abs" style="left:912.85px;top:659.10px" width="10.3" height="7.4" viewBox="0 0 10.3 7.4"><path d="M2 2 L5.15 5.4 L8.3 2" fill="none" stroke="#333" stroke-width="1.3" stroke-linecap="round" stroke-linejoin="round"/></svg>
<div class="abs" style="left:968px;top:648.30px;width:119px;height:29px;border-radius:14.5px;background:#dcfce7;border:1px solid #cdeed8"></div>
<div class="t" style="left:977.2px;top:656px;font-size:13px;font-weight:normal;color:#1e6b3c;-webkit-text-stroke:0.2px #1e6b3c">Yes</div>
<svg class="abs" style="left:1064.85px;top:659.10px" width="10.3" height="7.4" viewBox="0 0 10.3 7.4"><path d="M2 2 L5.15 5.4 L8.3 2" fill="none" stroke="#333" stroke-width="1.3" stroke-linecap="round" stroke-linejoin="round"/></svg>
<div class="abs" style="left:1120px;top:648.30px;width:126.5px;height:29px;border-radius:14.5px;background:#dcfce7;border:1px solid #cdeed8"></div>
<div class="t" style="left:1129.2px;top:656px;font-size:13px;font-weight:normal;color:#1e6b3c;-webkit-text-stroke:0.2px #1e6b3c">Yes</div>
<svg class="abs" style="left:1224.35px;top:659.10px" width="10.3" height="7.4" viewBox="0 0 10.3 7.4"><path d="M2 2 L5.15 5.4 L8.3 2" fill="none" stroke="#333" stroke-width="1.3" stroke-linecap="round" stroke-linejoin="round"/></svg>
<div class="abs" style="left:1492.5px;top:648.30px;width:118.5px;height:29px;border-radius:14.5px;background:#dcfce7;border:1px solid #cdeed8"></div>
<div class="t" style="left:1501.7px;top:656px;font-size:13px;font-weight:normal;color:#1e6b3c;-webkit-text-stroke:0.2px #1e6b3c">Signed</div>
<svg class="abs" style="left:1588.85px;top:659.10px" width="10.3" height="7.4" viewBox="0 0 10.3 7.4"><path d="M2 2 L5.15 5.4 L8.3 2" fill="none" stroke="#333" stroke-width="1.3" stroke-linecap="round" stroke-linejoin="round"/></svg>
<div class="abs" style="left:1645px;top:648.30px;width:120px;height:29px;border-radius:14.5px;background:#f3f4f6;border:1px solid #e6e7ea"></div>
<div class="t" style="left:1654px;top:656px;font-size:13px;font-weight:normal;color:#2a2a2a;-webkit-text-stroke:0.2px #2a2a2a">N/A</div>
<div class="abs" style="left:1279.5px;top:649.30px;width:65px;height:27px;border-radius:13.5px;background:#f3e8ff"></div>
<div class="t" style="left:1288.0px;top:658px;font-size:12.2px;font-weight:bold;color:#6b21a8;">Non-QM</div>
<div class="abs" style="left:101px;top:733.70px;width:1629px;height:1px;background:#eceef1"></div>
<div class="t" style="left:117px;top:706px;font-size:14.1px;font-weight:bold;color:#111;">Cleo Sterling</div>
<div class="abs" style="left:294.5px;top:696.40px;width:190.5px;height:28px;border-radius:14px;background:#5d5df2"></div>
<div class="t" style="left:303.2px;top:705px;font-size:12.1px;font-weight:bold;color:#fff;opacity:.96">Submitted to UW</div>
<svg class="abs" style="left:463.40px;top:706.85px" width="9.8" height="7.1" viewBox="0 0 9.8 7.1"><path d="M2 2 L4.9 5.1 L7.800000000000001 2" fill="none" stroke="rgba(255,255,255,.85)" stroke-width="1.3" stroke-linecap="round" stroke-linejoin="round"/></svg>
<div class="t" style="left:519px;top:704px;font-size:14.8px;font-weight:normal;color:#222;">The Loan Store</div>
<div class="abs" style="left:650.5px;top:697.40px;width:38.5px;height:26px;border-radius:13px;background:#f4f5f7"></div>
<div class="t" style="left:659.2px;top:705px;font-size:12.8px;font-weight:normal;color:#4a4a4a;-webkit-text-stroke:0.15px #4a4a4a">N/A</div>
<div class="abs" style="left:773px;top:695.90px;width:162px;height:29px;border-radius:14.5px;background:#dcfce7;border:1px solid #cdeed8"></div>
<div class="t" style="left:782.2px;top:704px;font-size:13px;font-weight:normal;color:#1e6b3c;-webkit-text-stroke:0.2px #1e6b3c">Waived</div>
<svg class="abs" style="left:912.85px;top:706.70px" width="10.3" height="7.4" viewBox="0 0 10.3 7.4"><path d="M2 2 L5.15 5.4 L8.3 2" fill="none" stroke="#333" stroke-width="1.3" stroke-linecap="round" stroke-linejoin="round"/></svg>
<div class="abs" style="left:968px;top:695.90px;width:119px;height:29px;border-radius:14.5px;background:#dcfce7;border:1px solid #cdeed8"></div>
<div class="t" style="left:977.2px;top:704px;font-size:13px;font-weight:normal;color:#1e6b3c;-webkit-text-stroke:0.2px #1e6b3c">Yes</div>
<svg class="abs" style="left:1064.85px;top:706.70px" width="10.3" height="7.4" viewBox="0 0 10.3 7.4"><path d="M2 2 L5.15 5.4 L8.3 2" fill="none" stroke="#333" stroke-width="1.3" stroke-linecap="round" stroke-linejoin="round"/></svg>
<div class="abs" style="left:1120px;top:695.90px;width:126.5px;height:29px;border-radius:14.5px;background:#fef6c3;border:1px solid #f3e9b0"></div>
<div class="t" style="left:1129.2px;top:704px;font-size:13px;font-weight:normal;color:#92400e;-webkit-text-stroke:0.2px #92400e">Need to Wait</div>
<svg class="abs" style="left:1224.35px;top:706.70px" width="10.3" height="7.4" viewBox="0 0 10.3 7.4"><path d="M2 2 L5.15 5.4 L8.3 2" fill="none" stroke="#333" stroke-width="1.3" stroke-linecap="round" stroke-linejoin="round"/></svg>
<div class="abs" style="left:1492.5px;top:695.90px;width:118.5px;height:29px;border-radius:14.5px;background:#f3f4f6;border:1px solid #e6e7ea"></div>
<div class="t" style="left:1501.7px;top:704px;font-size:13px;font-weight:normal;color:#2a2a2a;-webkit-text-stroke:0.2px #2a2a2a">Not Started</div>
<svg class="abs" style="left:1588.85px;top:706.70px" width="10.3" height="7.4" viewBox="0 0 10.3 7.4"><path d="M2 2 L5.15 5.4 L8.3 2" fill="none" stroke="#333" stroke-width="1.3" stroke-linecap="round" stroke-linejoin="round"/></svg>
<div class="abs" style="left:1645px;top:695.90px;width:120px;height:29px;border-radius:14.5px;background:#f3f4f6;border:1px solid #e6e7ea"></div>
<div class="t" style="left:1654px;top:704px;font-size:13px;font-weight:normal;color:#2a2a2a;-webkit-text-stroke:0.2px #2a2a2a">Not Started</div>
<div class="abs" style="left:1279.5px;top:696.90px;width:94px;height:27px;border-radius:13.5px;background:#d1fae5"></div>
<div class="t" style="left:1288.0px;top:705px;font-size:12.2px;font-weight:bold;color:#065f46;">Conventional</div>
<div class="abs" style="left:1378.0px;top:696.90px;width:81px;height:27px;border-radius:13.5px;background:#e0f2fe"></div>
<div class="t" style="left:1386.5px;top:705px;font-size:12.2px;font-weight:bold;color:#075985;">No CO Refi</div>
<div class="abs" style="left:101px;top:781.30px;width:1629px;height:1px;background:#eceef1"></div>
<div class="t" style="left:117px;top:753px;font-size:14.1px;font-weight:bold;color:#111;">Silas Knox</div>
<div class="abs" style="left:294.5px;top:744.00px;width:190.5px;height:28px;border-radius:14px;background:#fb6c10"></div>
<div class="t" style="left:303.2px;top:753px;font-size:12.1px;font-weight:bold;color:#fff;opacity:.96">Active Leads</div>
<svg class="abs" style="left:463.40px;top:754.45px" width="9.8" height="7.1" viewBox="0 0 9.8 7.1"><path d="M2 2 L4.9 5.1 L7.800000000000001 2" fill="none" stroke="rgba(255,255,255,.85)" stroke-width="1.3" stroke-linecap="round" stroke-linejoin="round"/></svg>
<div class="t" style="left:519px;top:752px;font-size:14.8px;font-weight:normal;color:#222;">No Lender</div>
<div class="abs" style="left:650.5px;top:745.00px;width:38.5px;height:26px;border-radius:13px;background:#f4f5f7"></div>
<div class="t" style="left:659.2px;top:753px;font-size:12.8px;font-weight:normal;color:#4a4a4a;-webkit-text-stroke:0.15px #4a4a4a">N/A</div>
<div class="abs" style="left:773px;top:743.50px;width:162px;height:29px;border-radius:14.5px;background:#f3f4f6;border:1px solid #e6e7ea"></div>
<div class="t" style="left:782.2px;top:751px;font-size:13px;font-weight:normal;color:#2a2a2a;-webkit-text-stroke:0.2px #2a2a2a">Not Started</div>
<svg class="abs" style="left:912.85px;top:754.30px" width="10.3" height="7.4" viewBox="0 0 10.3 7.4"><path d="M2 2 L5.15 5.4 L8.3 2" fill="none" stroke="#333" stroke-width="1.3" stroke-linecap="round" stroke-linejoin="round"/></svg>
<div class="abs" style="left:968px;top:743.50px;width:119px;height:29px;border-radius:14.5px;background:#f3f4f6;border:1px solid #e6e7ea"></div>
<div class="t" style="left:977.2px;top:751px;font-size:13px;font-weight:normal;color:#2a2a2a;-webkit-text-stroke:0.2px #2a2a2a">Not Started</div>
<svg class="abs" style="left:1064.85px;top:754.30px" width="10.3" height="7.4" viewBox="0 0 10.3 7.4"><path d="M2 2 L5.15 5.4 L8.3 2" fill="none" stroke="#333" stroke-width="1.3" stroke-linecap="round" stroke-linejoin="round"/></svg>
<div class="abs" style="left:1120px;top:743.50px;width:126.5px;height:29px;border-radius:14.5px;background:#f3f4f6;border:1px solid #e6e7ea"></div>
<div class="t" style="left:1129.2px;top:751px;font-size:13px;font-weight:normal;color:#2a2a2a;-webkit-text-stroke:0.2px #2a2a2a">Not Started</div>
<svg class="abs" style="left:1224.35px;top:754.30px" width="10.3" height="7.4" viewBox="0 0 10.3 7.4"><path d="M2 2 L5.15 5.4 L8.3 2" fill="none" stroke="#333" stroke-width="1.3" stroke-linecap="round" stroke-linejoin="round"/></svg>
<div class="abs" style="left:1492.5px;top:743.50px;width:118.5px;height:29px;border-radius:14.5px;background:#f3f4f6;border:1px solid #e6e7ea"></div>
<div class="t" style="left:1501.7px;top:751px;font-size:13px;font-weight:normal;color:#2a2a2a;-webkit-text-stroke:0.2px #2a2a2a">Not Started</div>
<svg class="abs" style="left:1588.85px;top:754.30px" width="10.3" height="7.4" viewBox="0 0 10.3 7.4"><path d="M2 2 L5.15 5.4 L8.3 2" fill="none" stroke="#333" stroke-width="1.3" stroke-linecap="round" stroke-linejoin="round"/></svg>
<div class="abs" style="left:1645px;top:743.50px;width:120px;height:29px;border-radius:14.5px;background:#f3f4f6;border:1px solid #e6e7ea"></div>
<div class="t" style="left:1654px;top:751px;font-size:13px;font-weight:normal;color:#2a2a2a;-webkit-text-stroke:0.2px #2a2a2a">Not Started</div>
<div class="abs" style="left:1279.5px;top:744.50px;width:94px;height:27px;border-radius:13.5px;background:#d1fae5"></div>
<div class="t" style="left:1288.0px;top:753px;font-size:12.2px;font-weight:bold;color:#065f46;">Conventional</div>
<div class="abs" style="left:101px;top:828.90px;width:1629px;height:1px;background:#eceef1"></div>
<div class="t" style="left:117px;top:800px;font-size:14.1px;font-weight:bold;color:#111;">Mei Lin</div>
<div class="abs" style="left:294.5px;top:791.60px;width:190.5px;height:28px;border-radius:14px;background:#fb6c10"></div>
<div class="t" style="left:303.2px;top:800px;font-size:12.1px;font-weight:bold;color:#fff;opacity:.96">Active Leads</div>
<svg class="abs" style="left:463.40px;top:802.05px" width="9.8" height="7.1" viewBox="0 0 9.8 7.1"><path d="M2 2 L4.9 5.1 L7.800000000000001 2" fill="none" stroke="rgba(255,255,255,.85)" stroke-width="1.3" stroke-linecap="round" stroke-linejoin="round"/></svg>
<div class="t" style="left:519px;top:799px;font-size:14.8px;font-weight:normal;color:#222;">No Lender</div>
<div class="abs" style="left:650.5px;top:792.60px;width:38.5px;height:26px;border-radius:13px;background:#f4f5f7"></div>
<div class="t" style="left:659.2px;top:801px;font-size:12.8px;font-weight:normal;color:#4a4a4a;-webkit-text-stroke:0.15px #4a4a4a">N/A</div>
<div class="abs" style="left:773px;top:791.10px;width:162px;height:29px;border-radius:14.5px;background:#f3f4f6;border:1px solid #e6e7ea"></div>
<div class="t" style="left:782.2px;top:799px;font-size:13px;font-weight:normal;color:#2a2a2a;-webkit-text-stroke:0.2px #2a2a2a">Not Started</div>
<svg class="abs" style="left:912.85px;top:801.90px" width="10.3" height="7.4" viewBox="0 0 10.3 7.4"><path d="M2 2 L5.15 5.4 L8.3 2" fill="none" stroke="#333" stroke-width="1.3" stroke-linecap="round" stroke-linejoin="round"/></svg>
<div class="abs" style="left:968px;top:791.10px;width:119px;height:29px;border-radius:14.5px;background:#f3f4f6;border:1px solid #e6e7ea"></div>
<div class="t" style="left:977.2px;top:799px;font-size:13px;font-weight:normal;color:#2a2a2a;-webkit-text-stroke:0.2px #2a2a2a">Not Started</div>
<svg class="abs" style="left:1064.85px;top:801.90px" width="10.3" height="7.4" viewBox="0 0 10.3 7.4"><path d="M2 2 L5.15 5.4 L8.3 2" fill="none" stroke="#333" stroke-width="1.3" stroke-linecap="round" stroke-linejoin="round"/></svg>
<div class="abs" style="left:1120px;top:791.10px;width:126.5px;height:29px;border-radius:14.5px;background:#f3f4f6;border:1px solid #e6e7ea"></div>
<div class="t" style="left:1129.2px;top:799px;font-size:13px;font-weight:normal;color:#2a2a2a;-webkit-text-stroke:0.2px #2a2a2a">Not Started</div>
<svg class="abs" style="left:1224.35px;top:801.90px" width="10.3" height="7.4" viewBox="0 0 10.3 7.4"><path d="M2 2 L5.15 5.4 L8.3 2" fill="none" stroke="#333" stroke-width="1.3" stroke-linecap="round" stroke-linejoin="round"/></svg>
<div class="abs" style="left:1492.5px;top:791.10px;width:118.5px;height:29px;border-radius:14.5px;background:#f3f4f6;border:1px solid #e6e7ea"></div>
<div class="t" style="left:1501.7px;top:799px;font-size:13px;font-weight:normal;color:#2a2a2a;-webkit-text-stroke:0.2px #2a2a2a">Not Started</div>
<svg class="abs" style="left:1588.85px;top:801.90px" width="10.3" height="7.4" viewBox="0 0 10.3 7.4"><path d="M2 2 L5.15 5.4 L8.3 2" fill="none" stroke="#333" stroke-width="1.3" stroke-linecap="round" stroke-linejoin="round"/></svg>
<div class="abs" style="left:1645px;top:791.10px;width:120px;height:29px;border-radius:14.5px;background:#f3f4f6;border:1px solid #e6e7ea"></div>
<div class="t" style="left:1654px;top:799px;font-size:13px;font-weight:normal;color:#2a2a2a;-webkit-text-stroke:0.2px #2a2a2a">Not Started</div>
<div class="abs" style="left:1279.5px;top:792.10px;width:94px;height:27px;border-radius:13.5px;background:#d1fae5"></div>
<div class="t" style="left:1288.0px;top:800px;font-size:12.2px;font-weight:bold;color:#065f46;">Conventional</div>
<div class="abs" style="left:101px;top:876.50px;width:1629px;height:1px;background:#eceef1"></div>
<div class="t" style="left:117px;top:848px;font-size:14.1px;font-weight:bold;color:#111;">Gideon Hale</div>
<div class="abs" style="left:294.5px;top:839.20px;width:190.5px;height:28px;border-radius:14px;background:#1fc35a"></div>
<div class="t" style="left:303.2px;top:848px;font-size:12.1px;font-weight:bold;color:#fff;opacity:.96">Funded / Closed</div>
<svg class="abs" style="left:463.40px;top:849.65px" width="9.8" height="7.1" viewBox="0 0 9.8 7.1"><path d="M2 2 L4.9 5.1 L7.800000000000001 2" fill="none" stroke="rgba(255,255,255,.85)" stroke-width="1.3" stroke-linecap="round" stroke-linejoin="round"/></svg>
<div class="t" style="left:519px;top:847px;font-size:14.8px;font-weight:normal;color:#222;">No Lender</div>
<div class="abs" style="left:650.5px;top:840.20px;width:38.5px;height:26px;border-radius:13px;background:#f4f5f7"></div>
<div class="t" style="left:659.2px;top:848px;font-size:12.8px;font-weight:normal;color:#4a4a4a;-webkit-text-stroke:0.15px #4a4a4a">N/A</div>
<div class="abs" style="left:773px;top:838.70px;width:162px;height:29px;border-radius:14.5px;background:#f3f4f6;border:1px solid #e6e7ea"></div>
<div class="t" style="left:782.2px;top:847px;font-size:13px;font-weight:normal;color:#2a2a2a;-webkit-text-stroke:0.2px #2a2a2a">Not Started</div>
<svg class="abs" style="left:912.85px;top:849.50px" width="10.3" height="7.4" viewBox="0 0 10.3 7.4"><path d="M2 2 L5.15 5.4 L8.3 2" fill="none" stroke="#333" stroke-width="1.3" stroke-linecap="round" stroke-linejoin="round"/></svg>
<div class="abs" style="left:968px;top:838.70px;width:119px;height:29px;border-radius:14.5px;background:#f3f4f6;border:1px solid #e6e7ea"></div>
<div class="t" style="left:977.2px;top:847px;font-size:13px;font-weight:normal;color:#2a2a2a;-webkit-text-stroke:0.2px #2a2a2a">Not Started</div>
<svg class="abs" style="left:1064.85px;top:849.50px" width="10.3" height="7.4" viewBox="0 0 10.3 7.4"><path d="M2 2 L5.15 5.4 L8.3 2" fill="none" stroke="#333" stroke-width="1.3" stroke-linecap="round" stroke-linejoin="round"/></svg>
<div class="abs" style="left:1120px;top:838.70px;width:126.5px;height:29px;border-radius:14.5px;background:#f3f4f6;border:1px solid #e6e7ea"></div>
<div class="t" style="left:1129.2px;top:847px;font-size:13px;font-weight:normal;color:#2a2a2a;-webkit-text-stroke:0.2px #2a2a2a">Not Started</div>
<svg class="abs" style="left:1224.35px;top:849.50px" width="10.3" height="7.4" viewBox="0 0 10.3 7.4"><path d="M2 2 L5.15 5.4 L8.3 2" fill="none" stroke="#333" stroke-width="1.3" stroke-linecap="round" stroke-linejoin="round"/></svg>
<div class="abs" style="left:1492.5px;top:838.70px;width:118.5px;height:29px;border-radius:14.5px;background:#f3f4f6;border:1px solid #e6e7ea"></div>
<div class="t" style="left:1501.7px;top:847px;font-size:13px;font-weight:normal;color:#2a2a2a;-webkit-text-stroke:0.2px #2a2a2a">Not Started</div>
<svg class="abs" style="left:1588.85px;top:849.50px" width="10.3" height="7.4" viewBox="0 0 10.3 7.4"><path d="M2 2 L5.15 5.4 L8.3 2" fill="none" stroke="#333" stroke-width="1.3" stroke-linecap="round" stroke-linejoin="round"/></svg>
<div class="abs" style="left:1645px;top:838.70px;width:120px;height:29px;border-radius:14.5px;background:#f3f4f6;border:1px solid #e6e7ea"></div>
<div class="t" style="left:1654px;top:847px;font-size:13px;font-weight:normal;color:#2a2a2a;-webkit-text-stroke:0.2px #2a2a2a">Not Started</div>
<div class="abs" style="left:1279.5px;top:839.70px;width:94px;height:27px;border-radius:13.5px;background:#d1fae5"></div>
<div class="t" style="left:1288.0px;top:848px;font-size:12.2px;font-weight:bold;color:#065f46;">Conventional</div>
<div class="abs" style="left:101px;top:924.10px;width:1629px;height:1px;background:#eceef1"></div>
<div class="t" style="left:117px;top:895px;font-size:14.1px;font-weight:bold;color:#111;">Freya Jensen</div>
<div class="abs" style="left:294.5px;top:886.80px;width:190.5px;height:28px;border-radius:14px;background:#6b7280"></div>
<div class="t" style="left:303.2px;top:896px;font-size:12.1px;font-weight:bold;color:#fff;opacity:.96">Cancelled</div>
<svg class="abs" style="left:463.40px;top:897.25px" width="9.8" height="7.1" viewBox="0 0 9.8 7.1"><path d="M2 2 L4.9 5.1 L7.800000000000001 2" fill="none" stroke="rgba(255,255,255,.85)" stroke-width="1.3" stroke-linecap="round" stroke-linejoin="round"/></svg>
<div class="t" style="left:519px;top:895px;font-size:14.8px;font-weight:normal;color:#222;">No Lender</div>
<div class="abs" style="left:650.5px;top:887.80px;width:38.5px;height:26px;border-radius:13px;background:#f4f5f7"></div>
<div class="t" style="left:659.2px;top:896px;font-size:12.8px;font-weight:normal;color:#4a4a4a;-webkit-text-stroke:0.15px #4a4a4a">N/A</div>
<div class="abs" style="left:773px;top:886.30px;width:162px;height:29px;border-radius:14.5px;background:#f3f4f6;border:1px solid #e6e7ea"></div>
<div class="t" style="left:782.2px;top:894px;font-size:13px;font-weight:normal;color:#2a2a2a;-webkit-text-stroke:0.2px #2a2a2a">Not Started</div>
<svg class="abs" style="left:912.85px;top:897.10px" width="10.3" height="7.4" viewBox="0 0 10.3 7.4"><path d="M2 2 L5.15 5.4 L8.3 2" fill="none" stroke="#333" stroke-width="1.3" stroke-linecap="round" stroke-linejoin="round"/></svg>
<div class="abs" style="left:968px;top:886.30px;width:119px;height:29px;border-radius:14.5px;background:#f3f4f6;border:1px solid #e6e7ea"></div>
<div class="t" style="left:977.2px;top:894px;font-size:13px;font-weight:normal;color:#2a2a2a;-webkit-text-stroke:0.2px #2a2a2a">Not Started</div>
<svg class="abs" style="left:1064.85px;top:897.10px" width="10.3" height="7.4" viewBox="0 0 10.3 7.4"><path d="M2 2 L5.15 5.4 L8.3 2" fill="none" stroke="#333" stroke-width="1.3" stroke-linecap="round" stroke-linejoin="round"/></svg>
<div class="abs" style="left:1120px;top:886.30px;width:126.5px;height:29px;border-radius:14.5px;background:#f3f4f6;border:1px solid #e6e7ea"></div>
<div class="t" style="left:1129.2px;top:894px;font-size:13px;font-weight:normal;color:#2a2a2a;-webkit-text-stroke:0.2px #2a2a2a">Not Started</div>
<svg class="abs" style="left:1224.35px;top:897.10px" width="10.3" height="7.4" viewBox="0 0 10.3 7.4"><path d="M2 2 L5.15 5.4 L8.3 2" fill="none" stroke="#333" stroke-width="1.3" stroke-linecap="round" stroke-linejoin="round"/></svg>
<div class="abs" style="left:1492.5px;top:886.30px;width:118.5px;height:29px;border-radius:14.5px;background:#f3f4f6;border:1px solid #e6e7ea"></div>
<div class="t" style="left:1501.7px;top:894px;font-size:13px;font-weight:normal;color:#2a2a2a;-webkit-text-stroke:0.2px #2a2a2a">Not Started</div>
<svg class="abs" style="left:1588.85px;top:897.10px" width="10.3" height="7.4" viewBox="0 0 10.3 7.4"><path d="M2 2 L5.15 5.4 L8.3 2" fill="none" stroke="#333" stroke-width="1.3" stroke-linecap="round" stroke-linejoin="round"/></svg>
<div class="abs" style="left:1645px;top:886.30px;width:120px;height:29px;border-radius:14.5px;background:#f3f4f6;border:1px solid #e6e7ea"></div>
<div class="t" style="left:1654px;top:894px;font-size:13px;font-weight:normal;color:#2a2a2a;-webkit-text-stroke:0.2px #2a2a2a">Not Started</div>
<div class="abs" style="left:1279.5px;top:887.30px;width:94px;height:27px;border-radius:13.5px;background:#d1fae5"></div>
<div class="t" style="left:1288.0px;top:896px;font-size:12.2px;font-weight:bold;color:#065f46;">Conventional</div>
<div class="abs" style="left:101px;top:971.70px;width:1629px;height:1px;background:#eceef1"></div>
<div class="t" style="left:117px;top:943px;font-size:14.1px;font-weight:bold;color:#111;">Sarah Johnson</div>
<div class="abs" style="left:294.5px;top:934.40px;width:190.5px;height:28px;border-radius:14px;background:#1fc35a"></div>
<div class="t" style="left:303.2px;top:943px;font-size:12.1px;font-weight:bold;color:#fff;opacity:.96">Funded / Closed</div>
<svg class="abs" style="left:463.40px;top:944.85px" width="9.8" height="7.1" viewBox="0 0 9.8 7.1"><path d="M2 2 L4.9 5.1 L7.800000000000001 2" fill="none" stroke="rgba(255,255,255,.85)" stroke-width="1.3" stroke-linecap="round" stroke-linejoin="round"/></svg>
<div class="t" style="left:519px;top:942px;font-size:14.8px;font-weight:normal;color:#222;">No Lender</div>
<div class="abs" style="left:650.5px;top:935.40px;width:38.5px;height:26px;border-radius:13px;background:#f4f5f7"></div>
<div class="t" style="left:659.2px;top:943px;font-size:12.8px;font-weight:normal;color:#4a4a4a;-webkit-text-stroke:0.15px #4a4a4a">N/A</div>
<div class="abs" style="left:773px;top:933.90px;width:162px;height:29px;border-radius:14.5px;background:#dcfce7;border:1px solid #cdeed8"></div>
<div class="t" style="left:782.2px;top:942px;font-size:13px;font-weight:normal;color:#1e6b3c;-webkit-text-stroke:0.2px #1e6b3c">Yes</div>
<svg class="abs" style="left:912.85px;top:944.70px" width="10.3" height="7.4" viewBox="0 0 10.3 7.4"><path d="M2 2 L5.15 5.4 L8.3 2" fill="none" stroke="#333" stroke-width="1.3" stroke-linecap="round" stroke-linejoin="round"/></svg>
<div class="abs" style="left:968px;top:933.90px;width:119px;height:29px;border-radius:14.5px;background:#dcfce7;border:1px solid #cdeed8"></div>
<div class="t" style="left:977.2px;top:942px;font-size:13px;font-weight:normal;color:#1e6b3c;-webkit-text-stroke:0.2px #1e6b3c">Yes</div>
<svg class="abs" style="left:1064.85px;top:944.70px" width="10.3" height="7.4" viewBox="0 0 10.3 7.4"><path d="M2 2 L5.15 5.4 L8.3 2" fill="none" stroke="#333" stroke-width="1.3" stroke-linecap="round" stroke-linejoin="round"/></svg>
<div class="abs" style="left:1120px;top:933.90px;width:126.5px;height:29px;border-radius:14.5px;background:#dcfce7;border:1px solid #cdeed8"></div>
<div class="t" style="left:1129.2px;top:942px;font-size:13px;font-weight:normal;color:#1e6b3c;-webkit-text-stroke:0.2px #1e6b3c">Yes</div>
<svg class="abs" style="left:1224.35px;top:944.70px" width="10.3" height="7.4" viewBox="0 0 10.3 7.4"><path d="M2 2 L5.15 5.4 L8.3 2" fill="none" stroke="#333" stroke-width="1.3" stroke-linecap="round" stroke-linejoin="round"/></svg>
<div class="abs" style="left:1492.5px;top:933.90px;width:118.5px;height:29px;border-radius:14.5px;background:#f3f4f6;border:1px solid #e6e7ea"></div>
<div class="t" style="left:1501.7px;top:942px;font-size:13px;font-weight:normal;color:#2a2a2a;-webkit-text-stroke:0.2px #2a2a2a">Not Started</div>
<svg class="abs" style="left:1588.85px;top:944.70px" width="10.3" height="7.4" viewBox="0 0 10.3 7.4"><path d="M2 2 L5.15 5.4 L8.3 2" fill="none" stroke="#333" stroke-width="1.3" stroke-linecap="round" stroke-linejoin="round"/></svg>
<div class="abs" style="left:1645px;top:933.90px;width:120px;height:29px;border-radius:14.5px;background:#f3f4f6;border:1px solid #e6e7ea"></div>
<div class="t" style="left:1654px;top:942px;font-size:13px;font-weight:normal;color:#2a2a2a;-webkit-text-stroke:0.2px #2a2a2a">Not Started</div>
<div class="abs" style="left:1279.5px;top:934.90px;width:94px;height:27px;border-radius:13.5px;background:#d1fae5"></div>
<div class="t" style="left:1288.0px;top:943px;font-size:12.2px;font-weight:bold;color:#065f46;">Conventional</div>
<div class="abs" style="left:1731px;top:96px;width:16px;height:871px;background:#f8f9fb"></div>
<div class="abs" style="left:1730px;top:420px;width:1px;height:540px;background:#e3e5e9"></div>
<div class="abs" style="left:0;top:958px;width:1747px;height:7px;background:#efefef"></div>
<div class="abs" style="left:0;top:965px;width:1747px;height:1px;background:#fdfdfd"></div>
<div class="abs" style="left:0;top:966px;width:1747px;height:1px;background:#bdbdbd"></div>
<div class="abs" style="left:1745px;top:0;width:1px;height:967px;background:#f6f6f6"></div>
<div class="abs" style="left:1746px;top:0;width:1px;height:967px;background:#b5b5b5"></div>
<div class="abs" style="left:0;top:0;width:1px;height:967px;background:#cbcbcb"></div>
<div class="abs" style="left:0;top:0;width:1747px;height:1px;background:#bcbcbc"></div>
<div class="abs" style="left:1px;top:1px;width:1744px;height:1px;background:#f4f4f4"></div>
<div class="abs" style="left:0;top:0;width:4px;height:4px;background:radial-gradient(circle at 100% 100%,transparent 3.4px,#b0b0b0 4px,#333 4.8px)"></div>
<div class="abs" style="right:0;top:0;width:4px;height:4px;background:radial-gradient(circle at 0 100%,transparent 3.4px,#b0b0b0 4px,#333 4.8px)"></div>
<div class="abs" style="left:0;bottom:0;width:4px;height:4px;background:radial-gradient(circle at 100% 0,transparent 3.4px,#b0b0b0 4px,#333 4.8px)"></div>
<div class="abs" style="right:0;bottom:0;width:4px;height:4px;background:radial-gradient(circle at 0 0,transparent 3.4px,#b0b0b0 4px,#333 4.8px)"></div>
</div></body></html>
